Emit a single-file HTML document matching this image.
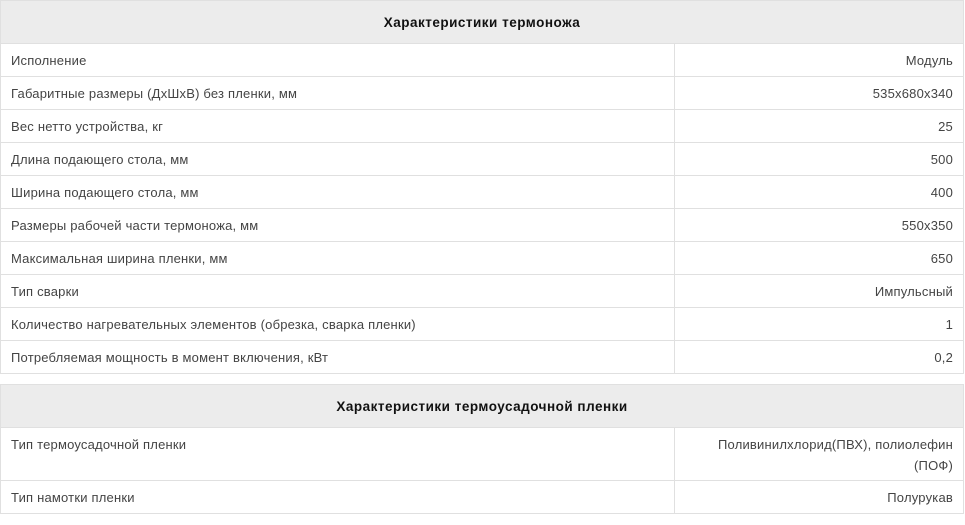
<!DOCTYPE html>
<html><head><meta charset="utf-8"><style>
body{margin:0;background:#fff;font-family:"Liberation Sans",sans-serif;font-size:13px;color:#444}
table{border-collapse:collapse;width:964px;margin:0}
td,th{border:1px solid #e0e0e0;padding:0 10px;vertical-align:middle;letter-spacing:0.2px}
th{background:#ececec;height:42px;font-weight:bold;color:#111;font-size:13.5px;text-align:center;letter-spacing:0.5px}
td{height:32px}
td.v{text-align:right;width:268px}
.t2{margin-top:10px}
.t2 td{vertical-align:top;padding-top:9px;height:23px}
.t2 tr.tall td{height:46px;line-height:21px;padding-top:6px}
</style></head><body>
<table>
<tr><th colspan="2">Характеристики термоножа</th></tr>
<tr><td>Исполнение</td><td class="v">Модуль</td></tr>
<tr><td>Габаритные размеры (ДхШхВ) без пленки, мм</td><td class="v">535х680х340</td></tr>
<tr><td>Вес нетто устройства, кг</td><td class="v">25</td></tr>
<tr><td>Длина подающего стола, мм</td><td class="v">500</td></tr>
<tr><td>Ширина подающего стола, мм</td><td class="v">400</td></tr>
<tr><td>Размеры рабочей части термоножа, мм</td><td class="v">550x350</td></tr>
<tr><td>Максимальная ширина пленки, мм</td><td class="v">650</td></tr>
<tr><td>Тип сварки</td><td class="v">Импульсный</td></tr>
<tr><td>Количество нагревательных элементов (обрезка, сварка пленки)</td><td class="v">1</td></tr>
<tr><td>Потребляемая мощность в момент включения, кВт</td><td class="v">0,2</td></tr>
</table>
<table class="t2">
<tr><th colspan="2">Характеристики термоусадочной пленки</th></tr>
<tr class="tall"><td>Тип термоусадочной пленки</td><td class="v">Поливинилхлорид(ПВХ), полиолефин (ПОФ)</td></tr>
<tr><td>Тип намотки пленки</td><td class="v">Полурукав</td></tr>
</table>
</body></html>
